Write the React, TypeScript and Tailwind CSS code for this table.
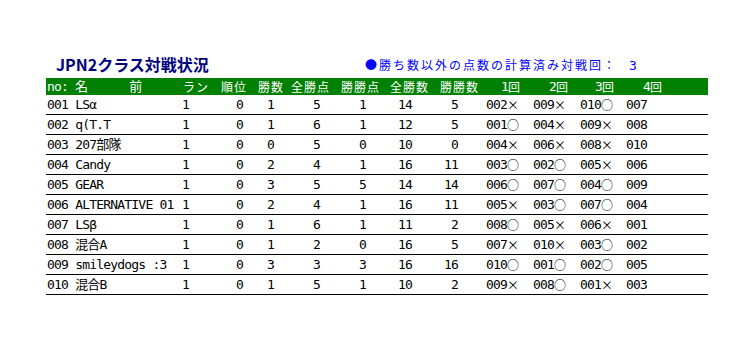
import React from 'react';

type Mark = '○' | '×';

interface Team {
  no: string;
  name: string;
  stats: string[]; // ラン 順位 勝数 全勝点 勝勝点 全勝数 勝勝数
  rounds: [string, Mark][];
  last: string;
}

const teams: Team[] = [
  { no: '001', name: 'LSα', stats: ['1', '0', '1', '5', '1', '14', '5'], rounds: [['002', '×'], ['009', '×'], ['010', '○']], last: '007' },
  { no: '002', name: 'q(T.T', stats: ['1', '0', '1', '6', '1', '12', '5'], rounds: [['001', '○'], ['004', '×'], ['009', '×']], last: '008' },
  { no: '003', name: '207部隊', stats: ['1', '0', '0', '5', '0', '10', '0'], rounds: [['004', '×'], ['006', '×'], ['008', '×']], last: '010' },
  { no: '004', name: 'Candy', stats: ['1', '0', '2', '4', '1', '16', '11'], rounds: [['003', '○'], ['002', '○'], ['005', '×']], last: '006' },
  { no: '005', name: 'GEAR', stats: ['1', '0', '3', '5', '5', '14', '14'], rounds: [['006', '○'], ['007', '○'], ['004', '○']], last: '009' },
  { no: '006', name: 'ALTERNATIVE 01', stats: ['1', '0', '2', '4', '1', '16', '11'], rounds: [['005', '×'], ['003', '○'], ['007', '○']], last: '004' },
  { no: '007', name: 'LSβ', stats: ['1', '0', '1', '6', '1', '11', '2'], rounds: [['008', '○'], ['005', '×'], ['006', '×']], last: '001' },
  { no: '008', name: '混合A', stats: ['1', '0', '1', '2', '0', '16', '5'], rounds: [['007', '×'], ['010', '×'], ['003', '○']], last: '002' },
  { no: '009', name: 'smileydogs :3', stats: ['1', '0', '3', '3', '3', '16', '16'], rounds: [['010', '○'], ['001', '○'], ['002', '○']], last: '005' },
  { no: '010', name: '混合B', stats: ['1', '0', '1', '5', '1', '10', '2'], rounds: [['009', '×'], ['008', '○'], ['001', '×']], last: '003' },
];

const grid =
  'grid grid-cols-[134px_32px_36px_36px_48px_50px_48px_52px_46px_46px_46px_42px]';
const mono = "font-['DejaVu_Sans_Mono','Noto_Sans_CJK_JP',monospace] text-[13px] tracking-[-0.8px]";
const jp = "font-['Noto_Sans_CJK_JP',sans-serif]";

// right padding of each stat value, matched to the sheet
const statPad = ['pr-[23px]', 'pr-[5px]', 'pr-[10px]', 'pr-[12px]', 'pr-[16px]', 'pr-[18px]', 'pr-[24px]'];
const roundPad = ['pl-[4px]', 'pl-[5px]', 'pl-[6px]'];

const App: React.FC = () => {
  return (
    <div className="w-[750px] h-[346px] bg-white text-black">
      <div className="pt-[52px] pl-[46px] w-[662px] box-content">
        {/* Title row */}
        <div className="flex items-center h-[26px]">
          <div className="w-[319px] pl-[10px]">
            <span className={`${jp} text-[16px] font-bold leading-none text-[#000080]`}>JPN2クラス対戦状況</span>
          </div>
          <div className={`${jp} flex items-center text-[12px] leading-none text-[#0000ff]`}>
            <span className="tracking-[2px]">●勝ち数以外の点数の計算済み対戦回：</span>
            <span className={`${mono} ml-[12px]`}>3</span>
          </div>
        </div>

        {/* Header */}
        <div className={`${grid} h-[17px] items-center bg-[#008000] text-white`}>
          <div className={`${mono} flex pl-[1px] leading-none`}>
            <span>no: 名</span>
            <span className="ml-[42px]">前</span>
          </div>
          {[
            ['ラン', 'pr-[3px]'],
            ['順位', 'pr-[1px]'],
            ['勝数', 'pr-[0px]'],
            ['全勝点', 'pr-[2px]'],
            ['勝勝点', 'pr-[2px]'],
            ['全勝数', 'pr-[1px]'],
            ['勝勝数', 'pr-[3px]'],
          ].map(([label, pad]) => (
            <div key={label} className={`${jp} ${pad} text-right text-[12px] tracking-[1px] leading-none`}>
              {label}
            </div>
          ))}
          {[
            ['1', 'pr-[8px]'],
            ['2', 'pr-[6px]'],
            ['3', 'pr-[6px]'],
            ['4', 'pr-[0px]'],
          ].map(([n, pad]) => (
            <div key={n} className={`${pad} flex justify-end items-center leading-none`}>
              <span className={mono}>{n}</span>
              <span className={`${jp} text-[12px]`}>回</span>
            </div>
          ))}
        </div>

        {/* Rows */}
        {teams.map((t) => (
          <div key={t.no} className={`${grid} ${mono} h-[20px] items-center border-b border-black leading-none`}>
            <div className="pl-[1px] whitespace-pre">
              {t.no} {t.name}
            </div>
            {t.stats.map((v, i) => (
              <div key={i} className={`${statPad[i]} text-right`}>
                {v}
              </div>
            ))}
            {t.rounds.map(([opp, mark], i) => (
              <div key={i} className={`${roundPad[i]} flex items-center`}>
                <span>{opp}</span>
                <span className={`${jp} text-[12px] tracking-normal`}>{mark}</span>
              </div>
            ))}
            <div className="pl-[6px]">{t.last}</div>
          </div>
        ))}
      </div>
    </div>
  );
};

export default App;
